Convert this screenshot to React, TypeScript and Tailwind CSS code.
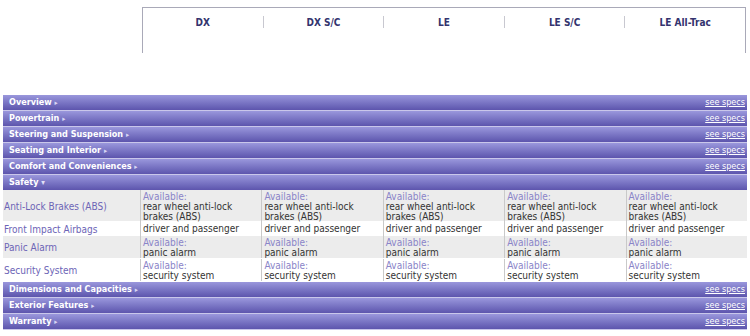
const models = ['DX', 'DX S/C', 'LE', 'LE S/C', 'LE All-Trac'];

const topSections = [
  'Overview',
  'Powertrain',
  'Steering and Suspension',
  'Seating and Interior',
  'Comfort and Conveniences',
];

const bottomSections = ['Dimensions and Capacities', 'Exterior Features', 'Warranty'];

const safetyRows = [
  { label: 'Anti-Lock Brakes (ABS)', available: true, value: 'rear wheel anti-lock brakes (ABS)', shade: true, h: 'h-[32px]' },
  { label: 'Front Impact Airbags', available: false, value: 'driver and passenger', shade: false, h: 'h-[14px]' },
  { label: 'Panic Alarm', available: true, value: 'panic alarm', shade: true, h: 'h-[23px]' },
  { label: 'Security System', available: true, value: 'security system', shade: false, h: 'h-[23px]' },
];

const SectionBar = ({ title }: { title: string }) => (
  <div className="flex items-center justify-between h-[16px] border-b border-[#c9c7ea] bg-gradient-to-b from-[#9a97dc] to-[#5d55ad] pl-[6px] pr-[2px]">
    <span className="text-[9px] font-bold text-white leading-none">
      {title} <span className="text-[7px] text-[#d8d6f4]">▸</span>
    </span>
    <span className="text-[9px] text-white underline leading-none">see specs</span>
  </div>
);

const App = () => {
  return (
    <div className="w-[750px] h-[336px] overflow-hidden bg-white" style={{ fontFamily: '"DejaVu Sans Condensed", "DejaVu Sans", sans-serif' }}>
      {/* Model header */}
      <div className="flex pt-[7px]">
        <div className="w-[142px] shrink-0" />
        <div className="w-[604px] h-[46px] border-t border-l border-r border-[#a9a9b8] flex pt-[8px]">
          {models.map((m, i) => (
            <div key={m} className={`flex-1 h-[12px] flex items-center justify-center ${i > 0 ? 'border-l border-[#c8c8d0]' : ''}`}>
              <span className="text-[10px] font-bold text-[#33336e]">{m}</span>
            </div>
          ))}
        </div>
      </div>

      <div className="h-[42px]" />

      <div className="px-[3px]">
        {topSections.map(s => (
          <SectionBar key={s} title={s} />
        ))}

        {/* Safety (open) */}
        <div className="flex items-center h-[15px] bg-gradient-to-b from-[#9a97dc] to-[#5d55ad] px-[6px]">
          <span className="text-[9px] font-bold text-white leading-none">
            Safety <span className="text-[8px] text-[#e2e0f7]">▾</span>
          </span>
        </div>

        {safetyRows.map(r => (
          <div key={r.label} className={`grid grid-cols-[137px_repeat(5,1fr)] border-b border-white ${r.h} ${r.shade ? 'bg-[#ececec]' : 'bg-white'}`}>
            <div className="flex items-center pl-[1px] text-[10px] text-[#6c64b6]">{r.label}</div>
            {models.map(m => (
              <div key={m} className="border-l border-[#c9c9c9] px-[2px] pt-[2px] text-[10px] leading-[10px] text-[#333]">
                {r.available && <div className="text-[#8a84c8]">Available:</div>}
                <div>{r.value}</div>
              </div>
            ))}
          </div>
        ))}

        {bottomSections.map(s => (
          <SectionBar key={s} title={s} />
        ))}
      </div>
    </div>
  );
};

export default App;
